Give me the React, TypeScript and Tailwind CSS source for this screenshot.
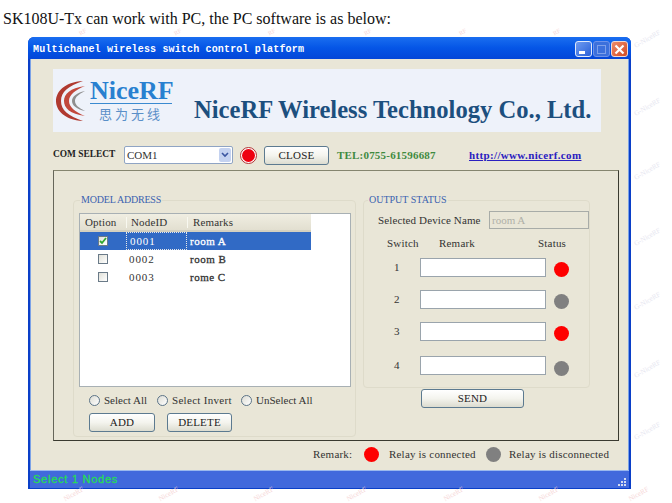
import React from "react";

function XpButton({ label, w }: { label: string; w: string }) {
  return (
    <div className={`${w} h-[19px] shrink-0 flex items-center justify-center rounded-[3px] border border-[#5c7a90] bg-gradient-to-b from-white via-[#f4f4ee] to-[#dcdcd0] text-[11px] leading-none text-[#222] tracking-[0.2px]`}>
      {label}
    </div>
  );
}

function Dot({ on }: { on: boolean }) {
  return <div className={`w-[15px] h-[15px] rounded-full shrink-0 ${on ? "bg-[#fe0000]" : "bg-[#808080]"}`} />;
}

function Radio({ label, w, track }: { label: string; w: string; track: string }) {
  return (
    <div className={`${w} flex items-center gap-[4px]`}>
      <div className="w-[11px] h-[11px] rounded-full border border-[#5c7488] bg-gradient-to-br from-[#dcdcd4] to-white shrink-0" />
      <span className={`text-[11px] leading-none text-[#333] ${track}`}>{label}</span>
    </div>
  );
}

function Check({ on }: { on: boolean }) {
  return (
    <div className="w-[10px] h-[10px] border border-[#6a7a88] bg-gradient-to-br from-[#e0e0d8] to-white flex items-center justify-center">
      {on && (
        <svg width="8" height="8" viewBox="0 0 8 8">
          <path d="M1 4l2 2 4-5" fill="none" stroke="#2fa82f" strokeWidth="1.8" />
        </svg>
      )}
    </div>
  );
}

function Row({ id, remark, on }: { id: string; remark: string; on?: boolean }) {
  return (
    <div className={`flex h-[18px] w-[231px] items-center text-[11px] leading-none ${on ? "bg-[#316ac5] text-white" : "text-[#333]"}`}>
      <div className="w-[46px] flex justify-center"><Check on={!!on} /></div>
      <div className={`w-[61px] h-full flex items-center pl-[3px] tracking-[0.9px] ${on ? "border border-dotted border-[#e8e8e8]" : ""}`}>{id}</div>
      <div className="pl-[3px] tracking-[0.5px] [-webkit-text-stroke:0.3px]">{remark}</div>
    </div>
  );
}

function OutRow({ n, on, mt, dotMt }: { n: number; on: boolean; mt: string; dotMt: string }) {
  return (
    <div className={`flex items-center ${mt}`}>
      <div className="w-[56px] pl-[30px] text-[11px] leading-none text-[#333]">{n}</div>
      <div className="w-[126px] h-[19px] bg-white border border-[#9aa4ac]" />
      <div className={`ml-[8px] ${dotMt}`}><Dot on={on} /></div>
    </div>
  );
}

const rightMarks = [40, 108, 172, 238, 302, 370, 432];
const topMarks = [83, 178, 272, 368, 463, 557];
const bottomMarks = [75, 170, 265, 358, 455, 550, 640];

export default function App() {
  return (
    <div className="relative w-[672px] h-[503px] bg-white overflow-hidden font-['Liberation_Serif',serif]">
      <div className="h-[37px] pl-[3px] pt-[10px] text-[16px] leading-[18px] text-[#111]">
        SK108U-Tx can work with PC, the PC software is as below:
      </div>

      <div className="ml-[28px] w-[603px] h-[452px] flex flex-col rounded-t-[6px] overflow-hidden bg-[#0a3fc8]">
        {/* title bar */}
        <div className="h-[22px] shrink-0 flex items-center justify-between pl-[5px] pr-[3px] bg-gradient-to-b from-[#1a6ef0] via-[#0555e6] to-[#0446d8]">
          <span className="mt-[4px] font-['Liberation_Mono',monospace] font-bold text-[10px] leading-none tracking-[0.16px] text-white">
            Multichanel wireless switch control platform
          </span>
          <div className="flex gap-[1px] mt-[2px]">
            <div className="w-[17px] h-[16px] rounded-[3px] border border-[#dfe8fa] bg-gradient-to-br from-[#6f9bf0] to-[#2a5fd8] flex items-end justify-start pl-[3px] pb-[2px]">
              <div className="w-[6px] h-[3px] bg-white" />
            </div>
            <div className="w-[17px] h-[16px] rounded-[3px] border border-[#6f92e8] bg-[#3c70dc] flex items-center justify-center">
              <div className="w-[9px] h-[9px] border border-[#7ea0ea]" />
            </div>
            <div className="w-[17px] h-[16px] rounded-[3px] border border-[#f0d8d0] bg-gradient-to-br from-[#ee8a68] to-[#d24a20] flex items-center justify-center">
              <svg width="11" height="11" viewBox="0 0 11 11">
                <path d="M1.5 1.5l8 8M9.5 1.5l-8 8" stroke="white" strokeWidth="2.2" />
              </svg>
            </div>
          </div>
        </div>

        {/* client */}
        <div className="flex-1 mx-[2px] bg-[#e9e6d7] flex flex-col border-x border-[#7ba2e7] min-h-0">
          {/* banner */}
          <div className="ml-[22px] mt-[10px] w-[548px] h-[63px] shrink-0 bg-[#eef2fa] flex items-center">
            <svg className="ml-[2px] shrink-0" width="32" height="40" viewBox="0 0 32 40">
              <path d="M28 0C9 1 1 11 1 20s8 19 27 20C13 35 6 29 6 20S13 5 28 0z" fill="#b03a30" />
              <path d="M30 5C15 7 9 13 9 20s6 13 21 15C20 31 14 26 14 20S20 9 30 5z" fill="#c2483c" />
              <path d="M30 10C21 12 17 16 17 20s4 8 13 10C24 27 20 24 20 20s4-7 10-10z" fill="#8f8f8f" />
            </svg>
            <div className="ml-[3px] w-[82px] shrink-0 flex flex-col items-stretch">
              <div className="text-[26px] leading-[22px] font-bold text-[#2880d0] text-center whitespace-nowrap">NiceRF</div>
              <div className="h-[1px] mt-[1px] bg-[#3a8ad0]" />
              <div className="mt-[3px] text-[13px] leading-[14px] text-[#5a8fc8] text-center tracking-[3px] font-['Noto_Sans_CJK_SC',sans-serif]">思为无线</div>
            </div>
            <div className="ml-[22px] mt-[20px] text-[24.6px] leading-none font-bold text-[#1c4f7e] whitespace-nowrap">
              NiceRF Wireless Technology Co., Ltd.
            </div>
          </div>

          {/* com row */}
          <div className="ml-[22px] mt-[14px] h-[18px] shrink-0 flex items-center">
            <div className="w-[71px] text-[9.4px] font-bold leading-none text-[#222] whitespace-nowrap">COM SELECT</div>
            <div className="w-[109px] h-[18px] bg-white border border-[#8fa4c4] rounded-[2px] flex items-center justify-between pl-[2px] pr-[1px]">
              <span className="text-[11px] leading-none text-[#333]">COM1</span>
              <div className="w-[12px] h-[14px] bg-[#c4d2f0] rounded-[2px] flex items-center justify-center">
                <svg width="8" height="6" viewBox="0 0 8 6"><path d="M1 1l3 3 3-3" fill="none" stroke="#3a55a0" strokeWidth="1.6" /></svg>
              </div>
            </div>
            <div className="ml-[7px] w-[17px] h-[17px] rounded-full border border-[#b03030] bg-white flex items-center justify-center">
              <div className="w-[13px] h-[13px] rounded-full bg-[#ee0010]" />
            </div>
            <div className="ml-[7px]"><XpButton label="CLOSE" w="w-[65px]" /></div>
            <div className="ml-[8px] w-[132px] text-[11px] font-bold leading-none text-[#3f8a3f] whitespace-nowrap tracking-[0.2px]">TEL:0755-61596687</div>
            <div className="text-[11px] font-bold leading-none text-[#2a20c0] underline whitespace-nowrap tracking-[0.35px]">http://www.nicerf.com</div>
          </div>

          {/* main panel */}
          <div className="ml-[22px] mt-[6px] w-[566px] h-[271px] shrink-0 border border-[#3a3a30] border-t-[#85856f] border-l-[#66665a] flex items-start pl-[19px] pt-[29px]">
            {/* model group */}
            <div className="relative w-[283px] h-[237px] shrink-0 border border-[#dedbca] rounded-[4px] px-[5px] pt-[12px]">
              <div className="absolute -top-[6px] left-[6px] bg-[#e9e6d7] px-[1px] text-[10px] leading-none text-[#3a62b0] whitespace-nowrap tracking-[-0.2px]">MODEL ADDRESS</div>
              <div className="w-[272px] h-[174px] bg-white border border-[#a8b0b4]">
                <div className="flex w-[231px] h-[18px] bg-gradient-to-b from-[#f0eee2] to-[#e2dfd0] border-b-2 border-[#d4d0c0] text-[11px] leading-none text-[#333] items-center tracking-[0.15px]">
                  <div className="w-[46px] pl-[5px]">Option</div>
                  <div className="w-[61px] pl-[4px] border-l border-[#f8f8f0]">NodeID</div>
                  <div className="pl-[5px] border-l border-[#f8f8f0]">Remarks</div>
                </div>
                <Row id="0001" remark="room A" on />
                <Row id="0002" remark="room B" />
                <Row id="0003" remark="rome C" />
              </div>
              <div className="mt-[7px] ml-[10px] h-[13px] flex items-center whitespace-nowrap">
                <Radio label="Select All" w="w-[68px]" track="tracking-normal" />
                <Radio label="Select Invert" w="w-[84px]" track="tracking-[0.3px]" />
                <Radio label="UnSelect All" w="w-[70px]" track="tracking-normal" />
              </div>
              <div className="mt-[6px] ml-[10px] flex gap-[12px]">
                <XpButton label="ADD" w="w-[66px]" />
                <XpButton label="DELETE" w="w-[65px]" />
              </div>
            </div>

            {/* output column */}
            <div className="ml-[7px] w-[227px] shrink-0 flex flex-col">
              <div className="relative h-[188px] border border-[#dedbca] rounded-[4px]">
                <div className="absolute -top-[6px] left-[4px] bg-[#e9e6d7] px-[1px] text-[10px] leading-none text-[#3a62b0] whitespace-nowrap">OUTPUT STATUS</div>
                <div className="flex items-center h-[18px] mt-[10px] pl-[14px]">
                  <div className="w-[111px] text-[11px] leading-none text-[#333] whitespace-nowrap tracking-[0.12px]">Selected Device Name</div>
                  <div className="w-[100px] h-[18px] border border-[#a8aca8] bg-[#e9e6d7] text-[11px] leading-none text-[#b0b0a8] flex items-center pl-[2px]">room A</div>
                </div>
                <div className="flex mt-[9px] text-[11px] leading-none text-[#333] tracking-[0.2px]">
                  <div className="w-[75px] pl-[23px]">Switch</div>
                  <div className="w-[99px]">Remark</div>
                  <div>Status</div>
                </div>
                <OutRow n={1} on mt="mt-[9px]" dotMt="mt-[3px]" />
                <OutRow n={2} on={false} mt="mt-[13px]" dotMt="mt-[3px]" />
                <OutRow n={3} on mt="mt-[13px]" dotMt="mt-[3px]" />
                <OutRow n={4} on={false} mt="mt-[14px]" dotMt="mt-[6px]" />
              </div>
              <div className="mt-[1px] ml-[58px]"><XpButton label="SEND" w="w-[103px]" /></div>
            </div>
          </div>

          {/* remark row */}
          <div className="mt-[6px] pl-[282px] h-[15px] shrink-0 flex items-center text-[11px] leading-none text-[#333] whitespace-nowrap tracking-[0.2px]">
            <span className="w-[51px]">Remark:</span>
            <Dot on />
            <span className="ml-[10px] w-[97px]">Relay is connected</span>
            <Dot on={false} />
            <span className="ml-[8px]">Relay is disconnected</span>
          </div>
        </div>

        {/* status bar */}
        <div className="h-[18px] mb-[1px] shrink-0 mx-[2px] bg-[#4169dc] border-t border-[#9ab8ee] flex items-center justify-between pl-[3px] pr-[2px]">
          <span className="font-['Liberation_Sans',sans-serif] text-[11px] leading-none tracking-[0.75px] text-[#25dd55] [-webkit-text-stroke:0.3px]">Select 1 Nodes</span>
          <svg width="10" height="10" viewBox="0 0 10 10" className="self-end mb-[1px]">
            <path d="M7 1h2v2H7zM4 4h2v2H4zM7 4h2v2H7zM1 7h2v2H1zM4 7h2v2H4zM7 7h2v2H7z" fill="#d4dcf0" />
          </svg>
        </div>
      </div>

      {/* watermarks */}
      {topMarks.map((x) => (
        <span key={x} className="absolute top-[29px] text-[6px] leading-none text-[#f6d6d6] -rotate-[30deg]" style={{ left: x - 4 }}>RF</span>
      ))}
      {rightMarks.map((y) => (
        <span key={y} className="absolute text-[7px] leading-none text-[#e6e6f0] -rotate-[30deg] left-[633px] whitespace-nowrap" style={{ top: y - 4 }}>G-NiceRF</span>
      ))}
      {bottomMarks.map((x) => (
        <span key={x} className="absolute top-[491px] text-[7px] leading-none text-[#f6d6d6] -rotate-[30deg] whitespace-nowrap" style={{ left: x - 12 }}>NiceRF</span>
      ))}
    </div>
  );
}
